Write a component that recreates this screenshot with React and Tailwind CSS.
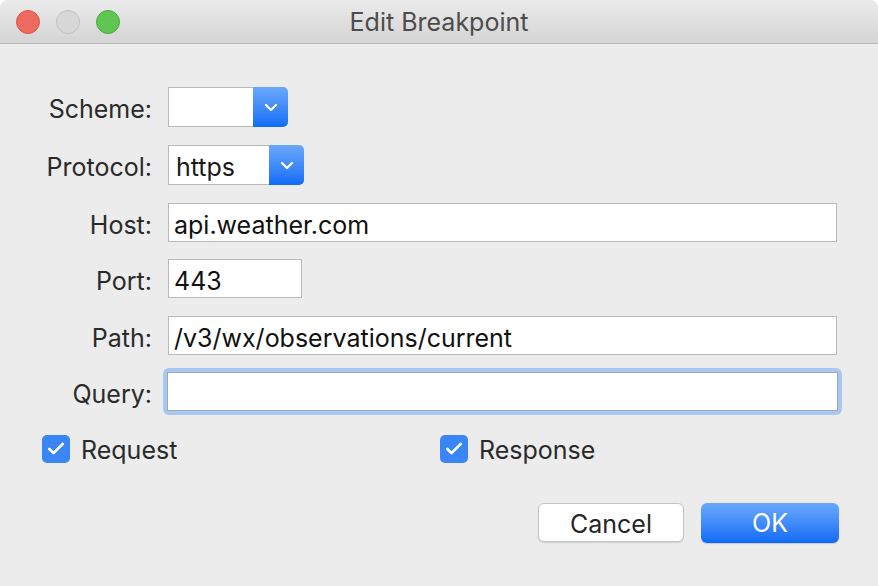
import { Check } from 'lucide-react';

const font = { fontFamily: 'Inter, "Liberation Sans", Arial, sans-serif' };

function Chevron() {
  return (
    <svg width="14" height="9" viewBox="0 0 14 9" fill="none">
      <path d="M2 2l5 5 5-5" stroke="white" strokeWidth="2.2" strokeLinecap="round" strokeLinejoin="round" />
    </svg>
  );
}

function Select({ value, width }) {
  return (
    <div className="flex h-[40px] items-stretch" style={{ width }}>
      <div className="flex flex-1 items-center border border-r-0 border-[#b9b9b9] bg-white pl-[7px] pt-[3px] text-[25px] leading-[30px] text-[#1a1a1a]">
        {value}
      </div>
      <div className="flex w-[35px] items-center justify-center rounded-r-[5px] bg-gradient-to-b from-[#6aa8fb] to-[#0d6cf6]">
        <Chevron />
      </div>
    </div>
  );
}

function Field({ value, width, focused }) {
  if (focused) {
    return (
      <div className="-mx-[5px] -my-[4px] flex-1 rounded-[6px] bg-[#a9c8f1] p-[4px]">
        <div className="h-[39px] border border-[#9fa9b5] bg-white" />
      </div>
    );
  }
  return (
    <div
      className={`flex h-[39px] items-center border border-[#b9b9b9] bg-white pl-[5px] pt-[4px] text-[25px] leading-[30px] text-[#111] ${width ? '' : 'flex-1'}`}
      style={width ? { width } : undefined}
    >
      {value}
    </div>
  );
}

function Row({ label, children, className = '' }) {
  return (
    <div className={`flex items-center ${className}`}>
      <div className="w-[153px] whitespace-nowrap pr-[1px] pt-[4px] text-right text-[25px] leading-[30px] text-[#2a2a2a]">{label}</div>
      <div className="ml-[15px] flex flex-1 items-center">{children}</div>
    </div>
  );
}

function Box({ label }) {
  return (
    <div className="flex h-[30px] items-center">
      <div className="flex h-[28px] w-[28px] items-center justify-center rounded-[5px] bg-[#3a86f6]">
        <Check size={20} color="white" strokeWidth={3.2} />
      </div>
      <span className="ml-[11px] pt-[2px] text-[25px] leading-[30px] text-[#2a2a2a]">{label}</span>
    </div>
  );
}

export default function App() {
  return (
    <div className="h-[586px] w-[878px] overflow-hidden rounded-t-[8px] bg-[#ececec]" style={font}>
      <div className="relative flex h-[44px] items-center justify-center border-b border-[#b6b6b6] bg-gradient-to-b from-[#ebebeb] to-[#d4d4d4]">
        <div className="absolute left-[16px] top-[10px] flex gap-[16px]">
          <span className="h-[24px] w-[24px] rounded-full border border-[#dc5547] bg-[#ee6a5e]" />
          <span className="h-[24px] w-[24px] rounded-full border border-[#c0c0c0] bg-[#d7d7d7]" />
          <span className="h-[24px] w-[24px] rounded-full border border-[#4ea73d] bg-[#5fc553]" />
        </div>
        <span className="pt-[2px] text-[25px] text-[#4c4c4c]">Edit Breakpoint</span>
      </div>

      <div className="flex flex-col pr-[41px] pt-[43px]">
        <Row label="Scheme:">
          <Select value="" width={120} />
        </Row>
        <Row label="Protocol:" className="mt-[18px]">
          <Select value="https" width={136} />
        </Row>
        <Row label="Host:" className="mt-[18px]">
          <Field value="api.weather.com" />
        </Row>
        <Row label="Port:" className="mt-[17px]">
          <Field value="443" width={134} />
        </Row>
        <Row label="Path:" className="mt-[18px]">
          <Field value="/v3/wx/observations/current" />
        </Row>
        <Row label="Query:" className="mt-[17px]">
          <Field focused />
        </Row>

        <div className="mt-[23px] flex items-center pl-[42px]">
          <div className="w-[398px]">
            <Box label="Request" />
          </div>
          <Box label="Response" />
        </div>

        <div className="mt-[39px] flex justify-end gap-[17px]">
          <button className="h-[39px] w-[146px] rounded-[6px] border border-[#c4c4c4] bg-white pt-[2px] text-[25px] text-[#262626] shadow-[0_1px_1px_rgba(0,0,0,0.12)]">
            Cancel
          </button>
          <button className="-mr-[2px] h-[40px] w-[138px] rounded-[6px] bg-gradient-to-b from-[#6aa8fb] to-[#0b6af6] pt-[2px] text-[25px] text-white shadow-[0_1px_1px_rgba(0,0,0,0.15)]">
            OK
          </button>
        </div>
      </div>
    </div>
  );
}
